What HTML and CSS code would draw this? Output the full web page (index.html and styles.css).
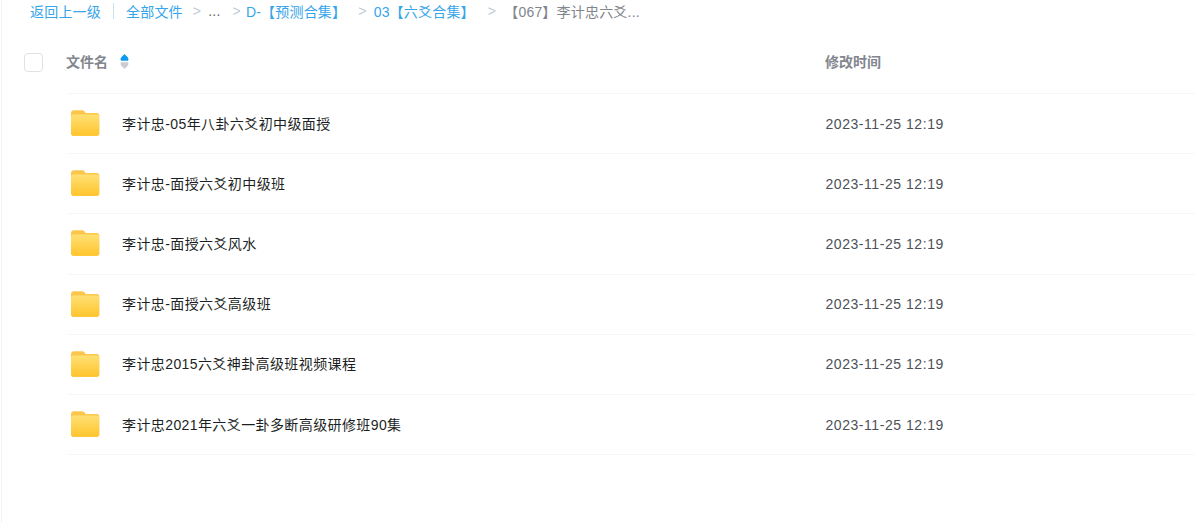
FILE: index.html
```html
<!DOCTYPE html>
<html lang="zh-CN">

<head>
    <meta charset="UTF-8">
    <title>全部文件</title>
    <link rel="stylesheet" href="styles.css">
</head>

<body>
    <svg class="defs" width="0" height="0">
        <defs>
            <linearGradient id="folderBack" x1="0" y1="0" x2="0" y2="1">
                <stop offset="0" stop-color="#fbc64e" />
                <stop offset="1" stop-color="#fcc840" />
            </linearGradient>
            <linearGradient id="folderFront" x1="0" y1="0" x2="0" y2="1">
                <stop offset="0" stop-color="#ffe074" />
                <stop offset="1" stop-color="#ffc42c" />
            </linearGradient>
            <symbol id="folder" viewBox="0 0 30 27">
                <path d="M3 0h8.500c1.200 0 2 .5 2.800 1.400L15.500 3H27c1.700 0 3 1.300 3 3v18c0 1.700-1.300 3-3 3H3c-1.700 0-3-1.300-3-3V3c0-1.700 1.300-3 3-3z" fill="url(#folderBack)" />
                <path d="M2.500 4.500h25c1.400 0 2.500 1.100 2.500 2.500v17c0 1.700-1.300 3-3 3H3c-1.700 0-3-1.300-3-3V7c0-1.400 1.100-2.500 2.500-2.500z" fill="url(#folderFront)" />
            </symbol>
        </defs>
    </svg>

    <div class="page">
        <div class="crumbs">
            <a class="crumb-back">返回上一级</a>
            <span class="crumb-bar"></span>
            <a class="crumb-all">全部文件</a>
            <span class="crumb-sep sep-a">&gt;</span>
            <span class="crumb-dots">...</span>
            <span class="crumb-sep sep-b">&gt;</span>
            <a class="crumb-d">D-【预测合集】</a>
            <span class="crumb-sep sep-c">&gt;</span>
            <a class="crumb-03">03【六爻合集】</a>
            <span class="crumb-sep sep-d">&gt;</span>
            <span class="crumb-now">【067】李计忠六爻...</span>
        </div>

        <div class="list-head">
            <span class="check"></span>
            <span class="head-name">文件名</span>
            <svg class="sort" width="9" height="15" viewBox="0 0 9 15">
                <path d="M4.500 0C3.200 1.800 0.500 3 0.500 5.300 0.500 6.200 1 6.800 1.800 6.800h5.400C8 6.800 8.500 6.200 8.500 5.300 8.500 3 5.800 1.800 4.500 0z" fill="#0d9bf2" />
                <path d="M4.500 15C3.200 13.200 0.500 12 0.500 9.700 0.500 8.800 1 8.200 1.800 8.200h5.400C8 8.200 8.500 8.800 8.500 9.700 8.500 12 5.800 13.200 4.500 15z" fill="#c9ccd1" />
            </svg>
            <span class="head-time">修改时间</span>
        </div>

        <ul class="files">
            <li class="file">
                <svg class="folder"><use href="#folder" /></svg>
                <span class="file-name">李计忠-05年八卦六爻初中级面授</span>
                <span class="file-time">2023-11-25 12:19</span>
            </li>
            <li class="file">
                <svg class="folder"><use href="#folder" /></svg>
                <span class="file-name">李计忠-面授六爻初中级班</span>
                <span class="file-time">2023-11-25 12:19</span>
            </li>
            <li class="file">
                <svg class="folder"><use href="#folder" /></svg>
                <span class="file-name">李计忠-面授六爻风水</span>
                <span class="file-time">2023-11-25 12:19</span>
            </li>
            <li class="file">
                <svg class="folder"><use href="#folder" /></svg>
                <span class="file-name">李计忠-面授六爻高级班</span>
                <span class="file-time">2023-11-25 12:19</span>
            </li>
            <li class="file">
                <svg class="folder"><use href="#folder" /></svg>
                <span class="file-name">李计忠2015六爻神卦高级班视频课程</span>
                <span class="file-time">2023-11-25 12:19</span>
            </li>
            <li class="file">
                <svg class="folder"><use href="#folder" /></svg>
                <span class="file-name">李计忠2021年六爻一卦多断高级研修班90集</span>
                <span class="file-time">2023-11-25 12:19</span>
            </li>
        </ul>
    </div>
</body>

</html>
```

FILE: styles.css
```css
* {
    box-sizing: border-box;
}

body {
    margin: 0;
    background: #fff;
    font-family: "Noto Sans CJK SC", "Liberation Sans", sans-serif;
    overflow: hidden;
}

.defs {
    display: block;
    height: 0;
}

.page {
    height: 523px;
    margin-left: 1px;
    border-left: 1px solid #f1f2f4;
}

.crumbs {
    display: flex;
    align-items: center;
    height: 21px;
    padding-left: 28px;
    font-size: 14px;
    letter-spacing: 0.2px;
    color: #36a5ea;
    white-space: nowrap;
}

.crumb-bar {
    width: 1px;
    height: 16px;
    margin: 0 12px;
    background: #c9e0f2;
}

.crumb-sep {
    color: #bfcbd8;
    font-family: "Liberation Sans", sans-serif;
    font-size: 14px;
}

.sep-a {
    margin-left: 10px;
}

.crumb-dots {
    margin-left: 7px;
    color: #666;
    font-family: "Liberation Sans", sans-serif;
}

.sep-b {
    margin-left: 12px;
}

.crumb-d {
    margin-left: 5px;
    font-family: "Liberation Sans", "Noto Sans CJK SC", sans-serif;
}

.sep-c {
    margin-left: 12px;
}

.crumb-03 {
    margin-left: 7px;
    font-family: "Liberation Sans", "Noto Sans CJK SC", sans-serif;
}

.sep-d {
    margin-left: 13px;
}

.crumb-now {
    margin-left: 8px;
    color: #81858c;
    font-family: "Liberation Sans", "Noto Sans CJK SC", sans-serif;
}

.list-head {
    display: flex;
    align-items: center;
    height: 73px;
    padding-left: 22px;
    padding-top: 9px;
    position: relative;
    font-size: 14px;
    font-weight: 700;
    color: #82868e;
}

.list-head::after {
    content: "";
    position: absolute;
    left: 66px;
    right: 0;
    bottom: 0;
    height: 1px;
    background: #f5f6f7;
}

.check {
    width: 19px;
    height: 19px;
    border: 1px solid #dfe1e5;
    border-radius: 4px;
}

.head-name {
    margin-left: 23px;
    margin-top: -2px;
}

.sort {
    margin-left: 12px;
    margin-top: -2px;
}

.head-time {
    position: absolute;
    left: 823px;
    top: 30px;
}

.files {
    list-style: none;
    margin: 0;
    padding: 0 0 0 66px;
}

.file {
    display: flex;
    align-items: center;
    height: 60.200px;
    border-bottom: 1px solid #f5f6f7;
    font-size: 14px;
    color: #1c1f24;
}

.folder {
    width: 28.500px;
    height: 26px;
    margin-left: 3px;
    margin-top: -1px;
    flex: none;
}

.file-name {
    width: 703.500px;
    margin-left: 22.500px;
    margin-top: -2px;
    letter-spacing: 0.4px;
    font-family: "Liberation Sans", "Noto Sans CJK SC", sans-serif;
    white-space: nowrap;
}

.file-time {
    font-family: "Liberation Sans", sans-serif;
    font-size: 14px;
    letter-spacing: 0.55px;
    color: #4d5158;
}
```
